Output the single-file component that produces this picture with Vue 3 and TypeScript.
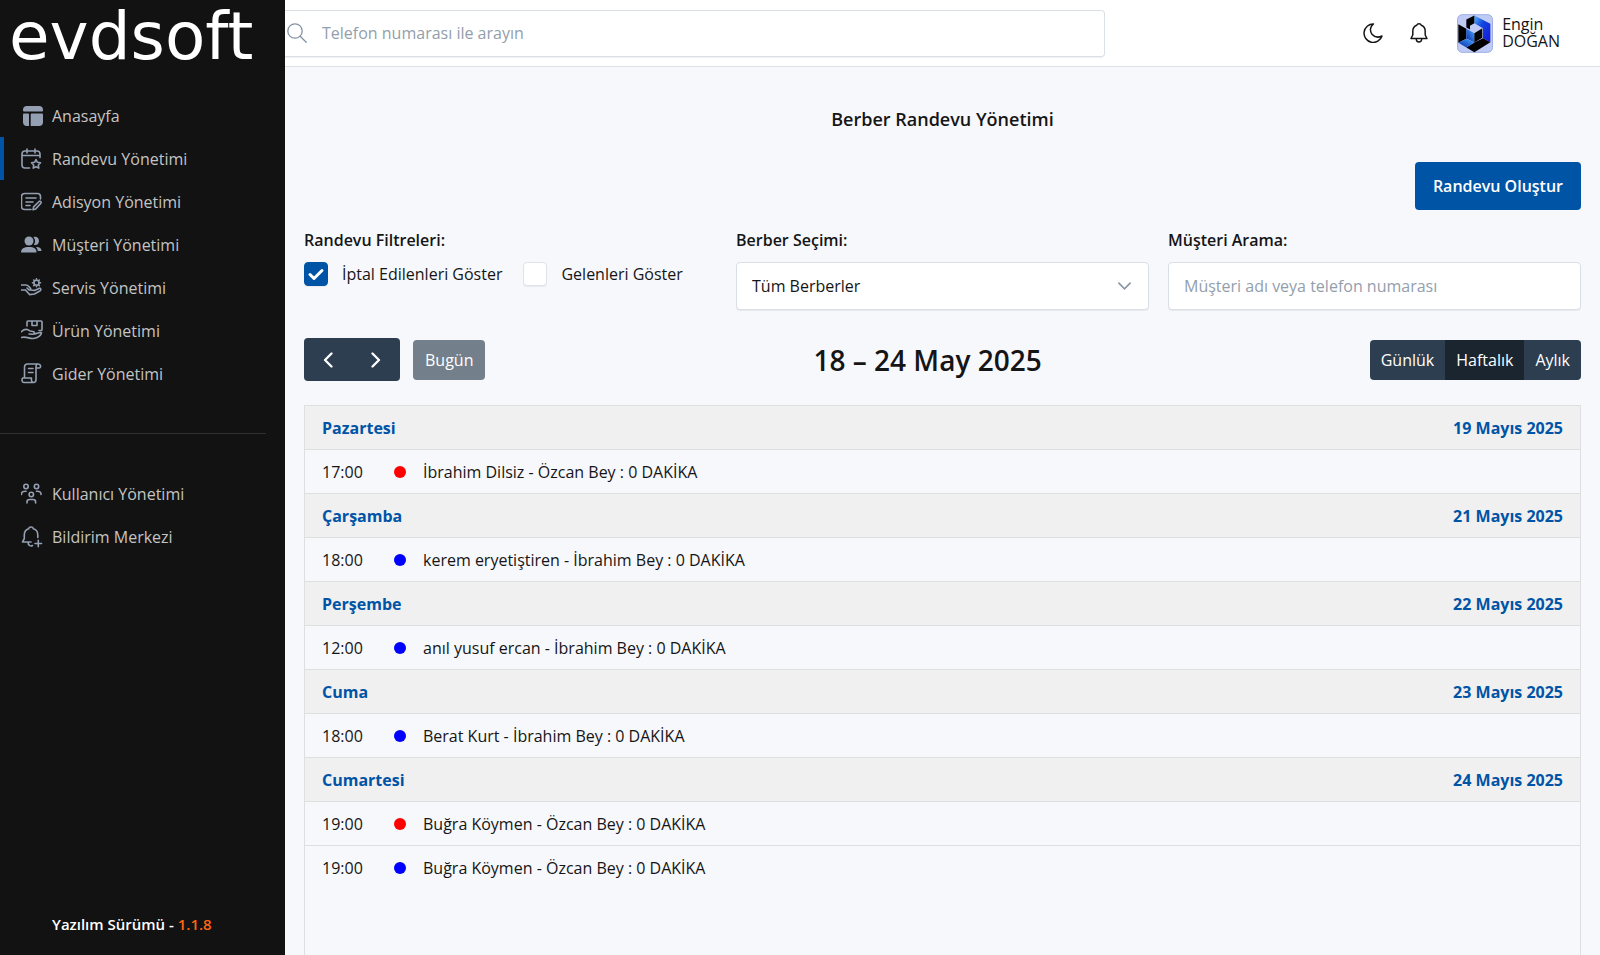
<script setup lang="ts">
import { ref } from 'vue'

interface NavItem { label: string; icon: string; active?: boolean }
interface Appointment { time: string; color: 'red' | 'blue'; text: string }
interface Day { name: string; date: string; items: Appointment[] }

const mainNav: NavItem[] = [
  { label: 'Anasayfa', icon: 'home' },
  { label: 'Randevu Yönetimi', icon: 'calendar', active: true },
  { label: 'Adisyon Yönetimi', icon: 'bill' },
  { label: 'Müşteri Yönetimi', icon: 'people' },
  { label: 'Servis Yönetimi', icon: 'service' },
  { label: 'Ürün Yönetimi', icon: 'product' },
  { label: 'Gider Yönetimi', icon: 'expense' },
]
const secondNav: NavItem[] = [
  { label: 'Kullanıcı Yönetimi', icon: 'users' },
  { label: 'Bildirim Merkezi', icon: 'bell' },
]
const navGroups = [mainNav, secondNav]

const days: Day[] = [
  { name: 'Pazartesi', date: '19 Mayıs 2025', items: [{ time: '17:00', color: 'red', text: 'İbrahim Dilsiz - Özcan Bey : 0 DAKİKA' }] },
  { name: 'Çarşamba', date: '21 Mayıs 2025', items: [{ time: '18:00', color: 'blue', text: 'kerem eryetiştiren - İbrahim Bey : 0 DAKİKA' }] },
  { name: 'Perşembe', date: '22 Mayıs 2025', items: [{ time: '12:00', color: 'blue', text: 'anıl yusuf ercan - İbrahim Bey : 0 DAKİKA' }] },
  { name: 'Cuma', date: '23 Mayıs 2025', items: [{ time: '18:00', color: 'blue', text: 'Berat Kurt - İbrahim Bey : 0 DAKİKA' }] },
  {
    name: 'Cumartesi',
    date: '24 Mayıs 2025',
    items: [
      { time: '19:00', color: 'red', text: 'Buğra Köymen - Özcan Bey : 0 DAKİKA' },
      { time: '19:00', color: 'blue', text: 'Buğra Köymen - Özcan Bey : 0 DAKİKA' },
    ],
  },
]

const views = ['Günlük', 'Haftalık', 'Aylık']
const view = ref('Haftalık')
const showCancelled = ref(true)
const showArrived = ref(false)
const barber = ref('all')
const customer = ref('')
const phone = ref('')
</script>

<template>
  <div class="layout">
    <aside class="sidebar">
      <a href="#" class="logo">evdsoft</a>
      <nav v-for="(group, g) in navGroups" :key="g" class="nav" :class="{ divided: g === 0 }">
        <a v-for="item in group" :key="item.label" href="#" class="nav-item" :class="{ active: item.active }">
          <svg class="nav-icon" viewBox="0 0 22 22" fill="none" stroke="currentColor" stroke-width="1.6" stroke-linecap="round" stroke-linejoin="round" aria-hidden="true">
            <g v-if="item.icon === 'home'" fill="currentColor" stroke="none">
              <path d="M6 1h12a4 4 0 0 1 4 4v.500a1 1 0 0 1-1 1H3a1 1 0 0 1-1-1V5a4 4 0 0 1 4-4z" />
              <path d="M3 8.500h4a1 1 0 0 1 1 1V21H6a4 4 0 0 1-4-4V9.500a1 1 0 0 1 1-1z" />
              <path d="M10.700 8.500H21a1 1 0 0 1 1 1V17a4 4 0 0 1-4 4H9.700V9.500a1 1 0 0 1 1-1z" />
            </g>
            <g v-else-if="item.icon === 'calendar'">
              <path d="M8.500 20H4a3 3 0 0 1-3-3V6a3 3 0 0 1 3-3h12a3 3 0 0 1 3 3v3.500M1 7.500h18M6 1v4M14 1v4" />
              <path d="m15 11.500 1.400 2.800 3.100.5-2.200 2.200.5 3.100-2.800-1.400-2.800 1.400.5-3.100-2.200-2.200 3.100-.5z" />
            </g>
            <g v-else-if="item.icon === 'bill'">
              <path d="M10 18.500H3.500a3 3 0 0 1-3-3v-10a3 3 0 0 1 3-3h13a3 3 0 0 1 3 3V8M5 7h10M5 11h7M5 14.500h4" />
              <path d="m12 18.800.6-3 5.500-5.300c1-1 2.700.6 1.800 1.800l-5.200 5.600z" />
            </g>
            <g v-else-if="item.icon === 'people'" fill="currentColor" stroke="none">
              <circle cx="8" cy="7" r="4.500" />
              <path d="M0 18.500c0-4 3-5.500 8-5.500s7.500 1.500 7.500 5.500z" />
              <path d="M12.500 3.200c3-1.200 5.500 1 5.500 3.900s-2.500 4.800-5.200 3.700c1.800-2 1.800-5.600-.3-7.600zM15 13c3.500.2 5.500 1 5.500 4h-3.700c-.1-1.500-.7-2.800-1.800-4z" />
            </g>
            <g v-else-if="item.icon === 'service'">
              <circle cx="15.500" cy="5.800" r="2.500" />
              <path d="M15.500 1.800v1M15.500 8.800v1M11.500 5.800h1M18.500 5.800h1M12.700 3l.7.700M17.600 7.900l.7.700M12.700 8.600l.7-.7M17.600 3.700l.7-.7" />
              <path d="M0 8h5c1.500 0 2 .6 3 1.700l1.500 1.700c.7 1.200-.7 2.200-1.800 1.200L6 11M9.500 13l4 .4 4.500-2c2-.5 2.500 1.500.8 2.600L13.500 17l-5 .6L4.500 13H0" />
            </g>
            <g v-else-if="item.icon === 'product'">
              <path d="M6 6V2a1 1 0 0 1 1-1h13a1 1 0 0 1 1 1v7.500a1 1 0 0 1-1 1h-2M11 1v4.500h5V1" />
              <path d="M0 12c3-3 6-3.500 9-1l3 .5c2.500.8 1.500 3-.5 2.800L8 14M12.500 14c3 0 5-2 8-1.500 0 2-3 5.500-8 6-4 .5-7-2.500-12.500-1" />
            </g>
            <g v-else-if="item.icon === 'expense'">
              <path d="M3.500 14V4.500c0-2.500 1-3.500 3-3.500H17c-1.500 0-2 1-2 3v12.500c0 2-1 3-2.500 3H3c-2.500 0-2.500-4.500-1-4.500h8.500c-.5 2 .3 4.500 2 4.500M17 1c3 0 3.500 4 1 4h-3M7.500 5.500H12M7.500 9.500H12" />
            </g>
            <g v-else-if="item.icon === 'users'">
              <circle cx="5" cy="3.500" r="2.200" /><circle cx="15.500" cy="3.500" r="2.200" /><circle cx="10.300" cy="11.500" r="2.200" />
              <path d="M.5 11.500c-.2-2.500 1.500-3.500 4.500-3.200M20 11.500c.2-2.500-1.500-3.500-4.500-3.200M6 20v-1c0-1.500 1-2.500 2.500-2.500h3.600c1.500 0 2.500 1 2.500 2.500v1" />
            </g>
            <g v-else>
              <path d="M10 16H1.500l1.800-3.300V9c0-3.500 2-5.500 4.300-6.200.5-2.400 4.300-2.400 4.800 0C15 3.500 16.800 5.500 16.800 9v2.500M7 16c0 4 3 4.500 4.500 3.500M17.300 14.200v6.500M14 17.500h6.600" />
            </g>
          </svg>
          <span>{{ item.label }}</span>
        </a>
      </nav>
      <p class="version">Yazılım Sürümü - <span>1.1.8</span></p>
    </aside>

    <div class="page">
      <header class="topbar">
        <label class="search">
          <svg viewBox="0 0 20 20" fill="none" stroke="currentColor" stroke-width="1.300" stroke-linecap="round" aria-hidden="true"><circle cx="8" cy="8" r="7.200" /><path d="m13.200 13.200 6 6" /></svg>
          <input v-model="phone" type="search" placeholder="Telefon numarası ile arayın" aria-label="Telefon numarası ile arayın" />
        </label>
        <div class="actions">
          <button type="button" class="icon-btn" aria-label="Karanlık mod">
            <svg viewBox="0 0 20 20" fill="none" stroke="currentColor" stroke-width="1.500" stroke-linejoin="round"><path d="M10.500 1C7 3.500 6.500 8 9 11.200c2.500 3 6.500 3.500 10 1.800A9.200 9.200 0 1 1 10.500 1z" /></svg>
          </button>
          <button type="button" class="icon-btn" aria-label="Bildirimler">
            <svg viewBox="0 0 20 20" fill="none" stroke="currentColor" stroke-width="1.500" stroke-linejoin="round"><path d="M2 15.500h16L16.200 12V8.200C16.200 5 14.300 3 12.300 2.300c-.7-2-3.900-2-4.600 0C5.700 3 3.800 5 3.800 8.200V12zM7.200 15.500c0 4.700 5.600 4.700 5.600 0" /></svg>
          </button>
          <a href="#" class="profile">
            <svg class="avatar" viewBox="0 0 108 116" aria-hidden="true">
              <defs>
                <linearGradient id="ribbon" x1="0" y1="0" x2="1" y2="1"><stop offset="0" stop-color="#55b8ff" /><stop offset=".4" stop-color="#1246dd" /><stop offset="1" stop-color="#1515dc" /></linearGradient>
                <linearGradient id="facet" x1="0" y1="1" x2="1" y2="0"><stop offset="0" stop-color="#0824a8" /><stop offset="1" stop-color="#42aaff" /></linearGradient>
              </defs>
              <rect x="1.500" y="1.500" width="105" height="113" rx="14" fill="#bfcbf5" stroke="#9fb0e4" stroke-width="3" />
              <path d="M52 4 100 29v55L78 72V42L52 27z" fill="url(#ribbon)" />
              <path d="M28 16 52 4v23L39 35v11l-11-6z" fill="#000" />
              <path d="m4 30 24 14v30L4 86z" fill="#000" />
              <path d="m28 44 24 13v28L28 73z" fill="url(#facet)" />
              <path d="m52 57 24-15v29L52 85z" fill="#05060b" />
              <path d="M78 72 52 85 28 100l24 14 48-30z" fill="#000" />
              <path d="m4 86 24-12 24 11-24 15z" fill="url(#facet)" />
            </svg>
            <span class="name">Engin<br />DOĞAN</span>
          </a>
        </div>
      </header>

      <main class="content">
        <h1>Berber Randevu Yönetimi</h1>
        <button type="button" class="create">Randevu Oluştur</button>

        <section class="filters">
          <fieldset class="field">
            <legend>Randevu Filtreleri:</legend>
            <div class="checks">
              <label><input v-model="showCancelled" type="checkbox" />İptal Edilenleri Göster</label>
              <label><input v-model="showArrived" type="checkbox" />Gelenleri Göster</label>
            </div>
          </fieldset>
          <div class="field">
            <label for="barber">Berber Seçimi:</label>
            <select id="barber" v-model="barber" class="control"><option value="all">Tüm Berberler</option></select>
          </div>
          <div class="field">
            <label for="customer">Müşteri Arama:</label>
            <input id="customer" v-model="customer" type="text" class="control" placeholder="Müşteri adı veya telefon numarası" />
          </div>
        </section>

        <section class="toolbar">
          <div class="left">
            <div class="arrows">
              <button type="button" aria-label="Önceki hafta"><svg viewBox="0 0 10 16"><path d="M8.500 1.500 2 8l6.500 6.500" /></svg></button>
              <button type="button" aria-label="Sonraki hafta"><svg viewBox="0 0 10 16"><path d="M1.500 1.500 8 8l-6.500 6.500" /></svg></button>
            </div>
            <button type="button" class="today">Bugün</button>
          </div>
          <h2>18 – 24 May 2025</h2>
          <div class="views">
            <button v-for="v in views" :key="v" type="button" :class="{ selected: v === view }" @click="view = v">{{ v }}</button>
          </div>
        </section>

        <div class="calendar">
          <table>
            <colgroup><col class="c-time" /><col class="c-dot" /><col /></colgroup>
            <tbody v-for="day in days" :key="day.date">
              <tr class="day">
                <th colspan="3" scope="colgroup"><div class="day-head"><span>{{ day.name }}</span><span>{{ day.date }}</span></div></th>
              </tr>
              <tr v-for="(item, i) in day.items" :key="i">
                <td class="time">{{ item.time }}</td>
                <td><span class="dot" :class="item.color"></span></td>
                <td>{{ item.text }}</td>
              </tr>
            </tbody>
          </table>
        </div>
      </main>
    </div>
  </div>
</template>

<style>
body { margin: 0; }
</style>

<style scoped>
* { box-sizing: border-box; }
.layout {
  display: flex;
  min-height: 100vh;
  background: #f7f8fc;
  color: #151515;
  font: 16px/24px "Open Sans", "Noto Sans", sans-serif;
}
button, input, select { font: inherit; color: inherit; }
button { cursor: pointer; border: 0; padding: 0; }
a { color: inherit; text-decoration: none; }

.sidebar {
  flex: 0 0 285px;
  display: flex;
  flex-direction: column;
  background: #121212;
  color: #c4c4c4;
}
.logo {
  height: 94px;
  padding: 5px 0 0 9px;
  color: #fff;
  font: 66px/64px "DejaVu Sans", sans-serif;
}
.nav { display: flex; flex-direction: column; }
.nav.divided {
  margin: 0 19px 38px 0;
  padding-bottom: 38px;
  border-bottom: 1px solid #303030;
}
.nav-item {
  display: flex;
  align-items: center;
  gap: 9px;
  height: 43px;
  padding-left: 17px;
  border-left: 4px solid transparent;
}
.nav-item.active { border-left-color: #0054a6; }
.nav-icon { width: 22px; height: 22px; color: #94a0b2; }
.version { margin: auto 0 19px 52px; color: #fff; font-size: 15px; font-weight: 600; }
.version span { color: #ff6414; }

.page { flex: 1; min-width: 0; display: flex; flex-direction: column; }
.topbar {
  display: flex;
  justify-content: space-between;
  align-items: center;
  height: 67px;
  padding-right: 40px;
  background: #fff;
  border-bottom: 1px solid #dbe1e6;
}
.search {
  flex: 0 1 820px;
  display: flex;
  align-items: center;
  gap: 15px;
  height: 47px;
  padding-left: 2px;
  border: 1px solid #dae0e6;
  border-left: 0;
  border-radius: 0 4px 4px 0;
  box-shadow: 0 1px 1px #18243310;
}
.search svg { width: 20px; height: 20px; color: #8593a5; }
.search input { flex: 1; border: 0; padding: 0; outline: 0; background: none; }
::placeholder { color: #939eac; opacity: 1; }
.actions { display: flex; align-items: center; }
.icon-btn { background: none; width: 20px; height: 20px; margin-right: 26px; }
.icon-btn svg { display: block; width: 20px; height: 20px; }
.profile { display: flex; align-items: center; gap: 9px; margin-left: 2px; }
.avatar { width: 36px; height: 39px; }
.name { line-height: 17px; }

.content { flex: 1; display: flex; flex-direction: column; padding: 38px 19px 0; }
h1 { margin: 0; text-align: center; font-size: 18px; line-height: 28px; font-weight: 600; }
.create {
  align-self: flex-end;
  height: 48px;
  margin-top: 29px;
  padding: 0 18px;
  border-radius: 4px;
  background: #0054a6;
  color: #fff;
  font-weight: 600;
}
.filters { display: grid; grid-template-columns: repeat(3, 1fr); gap: 19px; margin-top: 18px; }
.field { margin: 0; padding: 0; border: 0; min-width: 0; }
.field > label, .field legend { display: block; padding: 0; margin-bottom: 10px; font-weight: 600; }
.checks { display: flex; gap: 21px; white-space: nowrap; }
.checks label { display: flex; align-items: center; gap: 14px; }
.checks input {
  appearance: none;
  width: 24px;
  height: 24px;
  margin: 0;
  border: 1px solid #dfe3ea;
  border-radius: 4px;
  background: #fff center / 18px no-repeat;
  box-shadow: 0 1px 1px #18243310;
}
.checks input:checked {
  border-color: #0054a6;
  background-color: #0054a6;
  background-image: url("data:image/svg+xml,%3Csvg xmlns='http://www.w3.org/2000/svg' viewBox='0 0 18 18' fill='none' stroke='white' stroke-width='3' stroke-linecap='round' stroke-linejoin='round'%3E%3Cpath d='m3 9.500 4 4 8-8'/%3E%3C/svg%3E");
}
.control {
  display: block;
  width: 100%;
  height: 48px;
  padding: 0 15px;
  border: 1px solid #dadfe6;
  border-radius: 4px;
  background: #fff;
  box-shadow: 0 1px 1px #18243310;
}
select.control {
  appearance: none;
  background: #fff url("data:image/svg+xml,%3Csvg xmlns='http://www.w3.org/2000/svg' viewBox='0 0 14 8' fill='none' stroke='%238896a7' stroke-width='1.800' stroke-linecap='round'%3E%3Cpath d='m1 1 6 6 6-6'/%3E%3C/svg%3E") right 17px center / 13px 8px no-repeat;
}

.toolbar { display: flex; justify-content: space-between; align-items: center; margin-top: 28px; }
.left { display: flex; align-items: center; gap: 13px; }
.arrows { display: flex; height: 43px; border-radius: 4px; background: #2c3e50; }
.arrows button { width: 48px; background: none; display: grid; place-items: center; }
.arrows svg { width: 10px; height: 16px; fill: none; stroke: #fff; stroke-width: 2.300; stroke-linecap: round; stroke-linejoin: round; }
.today { height: 40px; padding: 0 12px; border-radius: 4px; background: #737f8b; color: #fff; }
h2 { margin: 0; font-size: 28px; line-height: 40px; font-weight: 600; }
.views { display: flex; height: 40px; border-radius: 4px; overflow: hidden; }
.views button { padding: 0 11px; background: #2c3e50; color: #fff; }
.views .selected { background: #1a252f; }

.calendar { flex: 1; margin-top: 24px; border: 1px solid #dddfe1; border-bottom: 0; }
table { width: 100%; table-layout: fixed; border-spacing: 0; }
.c-time { width: 89px; }
.c-dot { width: 29px; }
th, td { height: 44px; padding: 0; border-bottom: 1px solid #dddfe1; text-align: left; }
tbody:last-child tr:last-child td { border-bottom: 0; }
.time { padding-left: 17px; }
.day th { padding: 0 17px; background: #f0f0f0; color: #0054a6; font-weight: 700; }
.day-head { display: flex; justify-content: space-between; }
.dot { display: block; width: 12px; height: 12px; border-radius: 50%; }
.red { background: #f00; }
.blue { background: #00f; }
</style>
